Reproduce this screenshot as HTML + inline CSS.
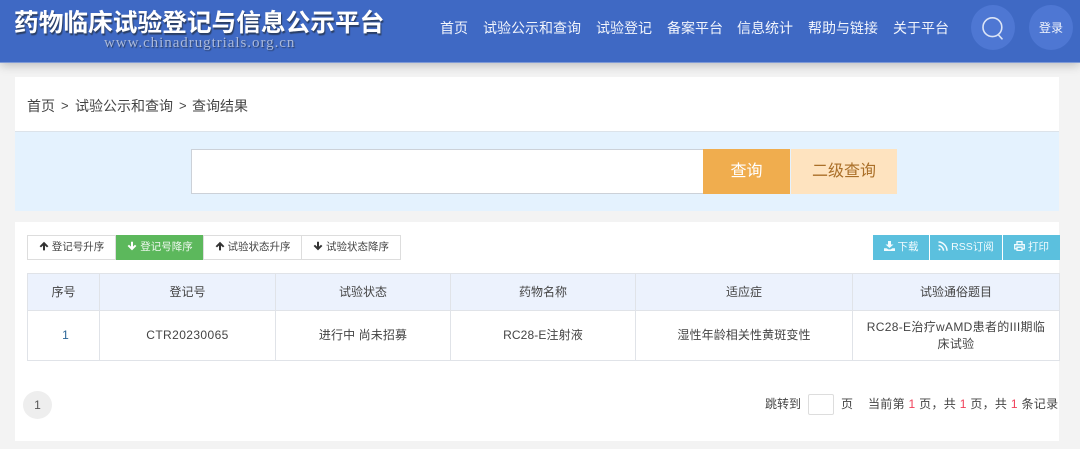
<!DOCTYPE html>
<html lang="zh-CN"><head><meta charset="utf-8"><title>查询结果</title>
<style>
*{box-sizing:border-box}
html,body{margin:0;padding:0;width:1080px;height:449px;overflow:hidden;background:#f3f3f3;font-family:"Liberation Sans","Noto Sans CJK SC",sans-serif;color:#444}
.a{position:absolute;white-space:nowrap}
.c{text-align:center}
#hd{position:absolute;left:0;top:0;width:1080px;height:63px;background:#3f69c4;border-bottom:1px solid #7f9ad6;box-shadow:0 2px 10px rgba(0,0,0,.24)}
.nav{top:18px;height:20px;line-height:20px;font-size:14px;color:#f2f5fc}
.w{position:absolute;background:#fff}
.bc{top:96px;font-size:14px;line-height:20px;color:#444}
.b{position:absolute;top:235px;height:25px;line-height:23px;border:1px solid #ddd;background:#fff;font-size:10.5px;color:#444;text-align:center;white-space:nowrap}
.g{background:#5cb85c;border-color:#5cb85c;color:#f1f9f1}
.i{position:absolute;top:235px;height:25px;line-height:24px;background:#5bc0de;font-size:10.5px;color:#f2fbfe;text-align:center;white-space:nowrap}
.th,.td{position:absolute;text-align:center;font-size:12px;display:flex;align-items:center;justify-content:center;line-height:17px}
.th{top:273px;height:38px;background:#ecf2fd;border:1px solid #e0e3e8;color:#444}
.td{top:310px;height:51px;background:#fff;border:1px solid #e0e3e8;color:#444;letter-spacing:.12px}
svg{vertical-align:-1px}
.r{color:#f0405a}
</style></head><body>
<div id="hd"></div>
<div class="a" style="left:14px;top:6px;font-size:24.7px;line-height:36px;font-weight:700;color:#fff;text-shadow:1px 2px 1px #2b3f66">药物临床试验登记与信息公示平台</div>
<div class="a" style="left:104px;top:34px;font-family:'Liberation Serif',serif;font-size:15px;line-height:18px;letter-spacing:.95px;color:#a9b9dc;text-shadow:1px 1px 1px #2b3f66">www.chinadrugtrials.org.cn</div>
<div class="a nav" style="left:440px">首页</div>
<div class="a nav" style="left:483px">试验公示和查询</div>
<div class="a nav" style="left:596px">试验登记</div>
<div class="a nav" style="left:667px">备案平台</div>
<div class="a nav" style="left:737px">信息统计</div>
<div class="a nav" style="left:808px">帮助与链接</div>
<div class="a nav" style="left:893px">关于平台</div>
<div class="a" style="left:971px;top:5px;width:44px;height:45px;border-radius:50%;background:#4e77d3"></div>
<svg class="a" style="left:980px;top:15px" width="26" height="26" viewBox="0 0 26 26" fill="none" stroke="#dbe4f6" stroke-width="1.6"><circle cx="12.4" cy="12.2" r="9.4"/><path d="M18.5 20l3.5 3.8" stroke-linecap="round"/></svg>
<div class="a" style="left:1029px;top:5px;width:44px;height:45px;border-radius:50%;background:#4e77d3"></div>
<div class="a c" style="left:1029px;top:19px;width:44px;font-size:12px;line-height:18px;color:#f2f5fc">登录</div>

<div class="w" style="left:15px;top:77px;width:1044px;height:55px"></div>
<div class="a bc" style="left:27px">首页</div>
<div class="a bc" style="left:61px;font-size:13px">&gt;</div>
<div class="a bc" style="left:75px">试验公示和查询</div>
<div class="a bc" style="left:179px;font-size:13px">&gt;</div>
<div class="a bc" style="left:192px">查询结果</div>

<div class="w" style="left:15px;top:131px;width:1044px;height:80px;background:#e4f2fe;border-top:1px solid #dce3ea"></div>
<div class="w" style="left:191px;top:149px;width:513px;height:45px;border:1px solid #ccd1d8"></div>
<div class="a c" style="left:703px;top:149px;width:87px;height:45px;line-height:46px;background:#f0ad4e;color:#fff;font-size:16px">查询</div>
<div class="a c" style="left:791px;top:149px;width:106px;height:45px;line-height:46px;background:#fee3bf;color:#aa6f28;font-size:16px">二级查询</div>

<div class="w" style="left:15px;top:222px;width:1044px;height:219px"></div>

<div class="b" style="left:27px;width:89px"><svg width="10" height="10" viewBox="0 0 10 10"><path d="M5 .8 9.4 5.2 8 6.4 6 4.6V9.4H4V4.6L2 6.4.6 5.2Z" fill="#333"/></svg> 登记号升序</div>
<div class="b g" style="left:116px;width:88px"><svg width="10" height="10" viewBox="0 0 10 10"><path d="M5 9.4 9.4 5 8 3.7 6 5.6V.8H4V5.6L2 3.7.6 5Z" fill="#fff"/></svg> 登记号降序</div>
<div class="b" style="left:203px;width:99px"><svg width="10" height="10" viewBox="0 0 10 10"><path d="M5 .8 9.4 5.2 8 6.4 6 4.6V9.4H4V4.6L2 6.4.6 5.2Z" fill="#333"/></svg> 试验状态升序</div>
<div class="b" style="left:301px;width:100px"><svg width="10" height="10" viewBox="0 0 10 10"><path d="M5 9.4 9.4 5 8 3.7 6 5.6V.8H4V5.6L2 3.7.6 5Z" fill="#333"/></svg> 试验状态降序</div>

<div class="i" style="left:873px;width:56px"><svg width="11" height="10" viewBox="0 0 11 10"><path d="M4 0H7V3.5H9.5L5.5 7 1.5 3.5H4ZM0 7.2H2.6L4.4 8.4H6.6L8.4 7.2H11V10H0Z" fill="#f2fbfe"/></svg> 下载</div>
<div class="i" style="left:930px;width:72px"><svg width="10" height="10" viewBox="0 0 10 10" fill="none" stroke="#f2fbfe" stroke-width="1.5"><path d="M.5 1C5 1 9 5 9 9.8M.5 4.5C3 4.5 5.5 7 5.5 9.8"/><circle cx="1.5" cy="8.5" r="1" fill="#f2fbfe" stroke="none"/></svg> RSS订阅</div>
<div class="i" style="left:1003px;width:57px"><svg width="11" height="10" viewBox="0 0 11 10" fill="none" stroke="#f2fbfe" stroke-width="1.3"><path d="M3 3.5V.7H8V3.5M3 7.8H.7V3.7H10.3V7.8H8M3 6.2H8V9.4H3Z"/></svg> 打印</div>

<div class="th" style="left:27px;width:73px">序号</div>
<div class="th" style="left:99px;width:177px">登记号</div>
<div class="th" style="left:275px;width:176px">试验状态</div>
<div class="th" style="left:450px;width:186px">药物名称</div>
<div class="th" style="left:635px;width:218px">适应症</div>
<div class="th" style="left:852px;width:208px">试验通俗题目</div>

<div class="td" style="left:27px;width:73px;color:#2a6496;padding-left:4px">1</div>
<div class="td" style="left:99px;width:177px;letter-spacing:.4px">CTR20230065</div>
<div class="td" style="left:275px;width:176px">进行中 尚未招募</div>
<div class="td" style="left:450px;width:186px">RC28-E注射液</div>
<div class="td" style="left:635px;width:218px">湿性年龄相关性黄斑变性</div>
<div class="td" style="left:852px;width:208px;padding:0 12px;letter-spacing:.32px">RC28-E治疗wAMD患者的III期临床试验</div>

<div class="a c" style="left:23px;top:391px;width:29px;height:28px;line-height:28px;border-radius:50%;background:#eee;font-size:12px;color:#555">1</div>
<div class="a" style="left:765px;top:396px;font-size:12px;line-height:17px">跳转到</div>
<div class="a" style="left:808px;top:394px;width:26px;height:21px;border:1px solid #ddd;border-radius:2px;background:#fff"></div>
<div class="a" style="left:841px;top:396px;font-size:12px;line-height:17px">页</div>
<div class="a" style="left:868px;top:396px;font-size:12px;line-height:17px;letter-spacing:.3px">当前第 <span class="r">1</span> 页，共 <span class="r">1</span> 页，共 <span class="r">1</span> 条记录</div>
</body></html>
